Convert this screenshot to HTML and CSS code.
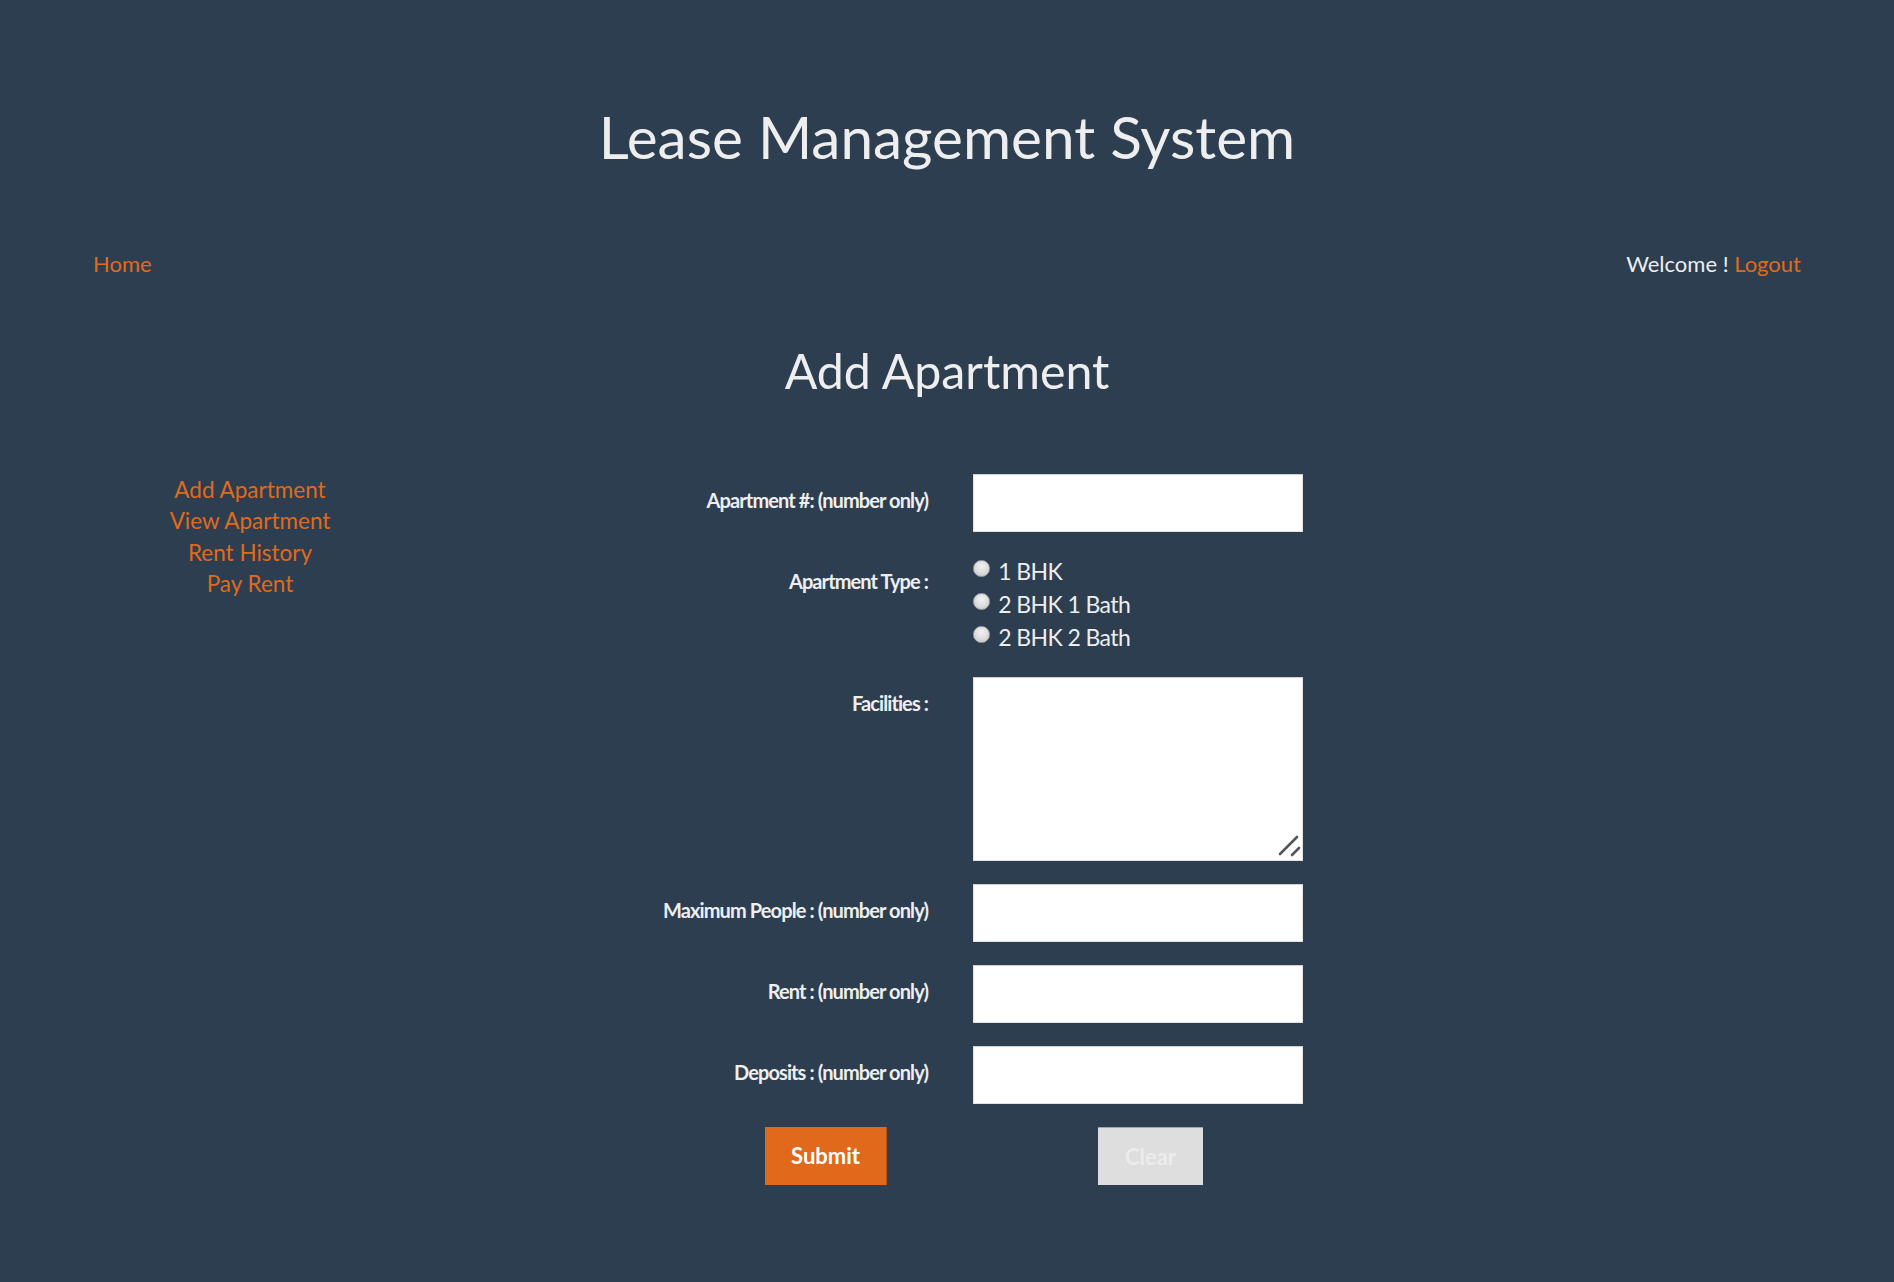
FILE: index.html
```html
<!DOCTYPE html>
<html lang="en">
<head>
<meta charset="utf-8">
<title>Lease Management System</title>
<link rel="stylesheet" href="styles.css">
</head>
<body>
<header class="site-header">
  <h1 class="site-title">Lease Management System</h1>
</header>
<nav class="top-nav">
  <a class="link" href="#">Home</a>
  <div class="user-box">Welcome ! <a class="link" href="#">Logout</a></div>
</nav>
<h2 class="page-title">Add Apartment</h2>
<main class="main-row">
  <aside class="sidebar">
    <a class="link side-link" href="#">Add Apartment</a>
    <a class="link side-link" href="#">View Apartment</a>
    <a class="link side-link" href="#">Rent History</a>
    <a class="link side-link" href="#">Pay Rent</a>
  </aside>
  <form class="apt-form">
    <label class="field-label" for="aptno">Apartment #: (number only)</label>
    <div class="field"><input class="text-input" id="aptno" type="text"></div>

    <div class="field-label">Apartment Type :</div>
    <div class="field radio-group">
      <label class="radio-line"><input class="radio" type="radio" name="type"> 1 BHK</label>
      <label class="radio-line"><input class="radio" type="radio" name="type"> 2 BHK 1 Bath</label>
      <label class="radio-line"><input class="radio" type="radio" name="type"> 2 BHK 2 Bath</label>
    </div>

    <label class="field-label" for="fac">Facilities :</label>
    <div class="field area-wrap">
      <textarea class="text-area" id="fac"></textarea>
      <svg class="grip" width="26" height="26" viewBox="0 0 26 26" aria-hidden="true">
        <line x1="22" y1="4" x2="5" y2="21" stroke="#555" stroke-width="2.6" stroke-linecap="round"/>
        <line x1="24" y1="15" x2="17" y2="22" stroke="#555" stroke-width="2.6" stroke-linecap="round"/>
      </svg>
    </div>

    <label class="field-label" for="maxp">Maximum People : (number only)</label>
    <div class="field"><input class="text-input" id="maxp" type="text"></div>

    <label class="field-label" for="rent">Rent : (number only)</label>
    <div class="field"><input class="text-input" id="rent" type="text"></div>

    <label class="field-label" for="dep">Deposits : (number only)</label>
    <div class="field"><input class="text-input" id="dep" type="text"></div>

    <div class="btn-cell btn-cell-left"><button class="btn btn-submit" type="button">Submit</button></div>
    <div class="btn-cell"><button class="btn btn-clear" type="button">Clear</button></div>
  </form>
</main>
</body>
</html>
```
FILE: styles.css
```css
html, body {
  margin: 0;
  padding: 0;
}
body {
  background: #2c3e50;
  color: #eeeeee;
  font-family: Lato, "Open Sans", sans-serif;
  min-height: 1282px;
}
.link {
  color: #e06a1c;
  text-decoration: none;
}
.site-header {
  padding-top: 101px;
}
.site-title {
  margin: 0;
  font-size: 58.5px;
  font-weight: 400;
  line-height: 1.2;
  text-align: center;
  color: #eeeeee;
}
.top-nav {
  display: flex;
  justify-content: space-between;
  padding: 0 93px;
  margin-top: 80px;
  font-size: 22px;
  line-height: 1.2;
}
.user-box {
  color: #eeeeee;
}
.page-title {
  margin: 64px 0 0;
  font-size: 48.3px;
  font-weight: 400;
  line-height: 1.2;
  text-align: center;
  color: #eeeeee;
}
.main-row {
  display: flex;
  margin-top: 74px;
}
.sidebar {
  width: 500px;
  display: flex;
  flex-direction: column;
  align-items: center;
  font-size: 22.5px;
  line-height: 31.5px;
  padding-top: 0;
}
.apt-form {
  display: grid;
  grid-template-columns: 428px 330px;
  column-gap: 45px;
  row-gap: 23px;
  align-items: start;
}
.field-label {
  text-align: right;
  font-weight: 700;
  font-size: 20px;
  line-height: 24px;
  letter-spacing: -0.9px;
  padding-top: 14px;
  color: #eeeeee;
}
.field {
  display: flex;
  flex-direction: column;
}
.area-wrap {
  position: relative;
}
.text-input {
  box-sizing: border-box;
  width: 330px;
  height: 58px;
  margin: 0;
  border: 1px solid #e2e2e2;
  border-top-color: #cfcfcf;
  background: #ffffff;
  font-family: Lato, sans-serif;
  font-size: 20px;
  padding: 0 10px;
  outline: none;
}
.text-area {
  box-sizing: border-box;
  width: 330px;
  height: 184px;
  margin: 0;
  border: 1px solid #e2e2e2;
  border-top-color: #cfcfcf;
  background: #ffffff;
  font-family: Lato, sans-serif;
  font-size: 20px;
  padding: 6px 10px;
  outline: none;
  display: block;
  resize: none;
}
.grip {
  position: absolute;
  right: 2px;
  bottom: 2px;
  pointer-events: none;
}
.radio-group {
  font-size: 23px;
  line-height: 33px;
  letter-spacing: -0.6px;
}
.radio-line {
  display: flex;
  align-items: center;
  height: 33px;
  white-space: pre;
}
.radio {
  -webkit-appearance: none;
  appearance: none;
  box-sizing: border-box;
  width: 17px;
  height: 17px;
  margin: -5px 3px 0 0;
  border-radius: 50%;
  border: 1px solid #a9a9a9;
  background: radial-gradient(circle at 50% 35%, #f2f2f2 0%, #dadada 60%, #bdbdbd 100%);
  flex: none;
}
.btn-cell {
  display: flex;
}
.btn-cell-left {
  justify-content: flex-end;
}
.btn {
  height: 58px;
  border: none;
  margin: 0;
  font-family: Lato, sans-serif;
  font-weight: 700;
  font-size: 22px;
  cursor: pointer;
}
.btn-submit {
  background: #e0691b;
  color: #ffffff;
  width: 122px;
  margin-right: 41px;
  border-right: 1px solid #b8561a;
}
.btn-clear {
  background: #dedede;
  color: #ececec;
  width: 105px;
  margin-left: 125px;
  border-top: 1px solid #9aa8b5;
}
```
